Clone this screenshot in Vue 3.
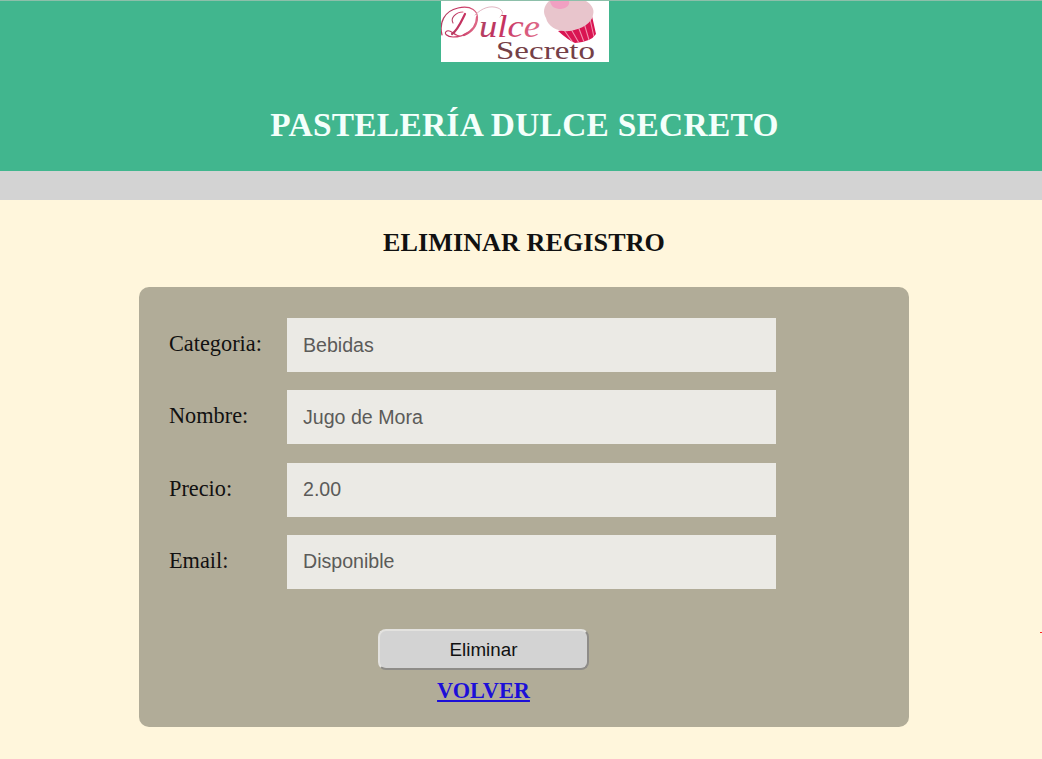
<script setup>
const fields = [
  { id: 'categoria', label: 'Categoria:', value: 'Bebidas' },
  { id: 'nombre', label: 'Nombre:', value: 'Jugo de Mora' },
  { id: 'precio', label: 'Precio:', value: '2.00' },
  { id: 'email', label: 'Email:', value: 'Disponible' },
]
</script>

<template>
  <div class="page">
    <header class="banner">
      <svg class="logo" width="168" height="61" viewBox="0 0 168 61" role="img" aria-label="Dulce Secreto">
        <defs>
          <linearGradient id="script-ink" x1="0" y1="0" x2="1" y2="0.25">
            <stop offset="0" stop-color="#a84a65" />
            <stop offset="0.45" stop-color="#c4305f" />
            <stop offset="1" stop-color="#dd6685" />
          </linearGradient>
          <clipPath id="cup"><path d="M117 30Q137 28 151 15L155 33Q150 41 134 42Q127 39 117 30Z" /></clipPath>
        </defs>
        <rect width="168" height="61" fill="#fff" />
        <path d="M117 30Q137 28 151 15L155 33Q150 41 134 42Q127 39 117 30Z" fill="#d91552" />
        <g clip-path="url(#cup)" stroke="#f290ae" stroke-width="1.1">
          <path d="M123 29l10 14M130 28l8 14M137 25l6 16M143 22l5 17M149 18l4 18" />
        </g>
        <path d="M108 0C102 6 102 12 105 17C107 26 117 31 129 30C141 28 151 22 152 14C154 8 150 3 145 0Z" fill="#e8c5cc" />
        <path d="M109 0C110 6 114 8 120 8C126 7 129 4 128 0Z" fill="#f1a0c2" />
        <g fill="none" stroke="url(#script-ink)" stroke-linecap="round">
          <path stroke-width="1.2" d="M1 34C-2 22 3 10 17 7C30 4 38 10 36 19C34 30 23 36 12 36C6 36 2 32 6 30C10 28 14 36 20 35" />
          <path stroke-width="1.1" d="M12 22C9 17 15 11 22 11" />
          <path stroke-width="2.2" d="M24 13C20 21 17 29 11 33M36 16C36 25 30 31 23 34" />
          <path stroke-width="0.8" stroke="#d9a3b2" d="M34 14C41 7 49 4 57 7C62 9 63 13 59 16" />
        </g>
        <text x="38" y="36" class="logo-script" textLength="61" lengthAdjust="spacingAndGlyphs" fill="url(#script-ink)">ulce</text>
        <text x="55" y="58" class="logo-serif" textLength="99" lengthAdjust="spacingAndGlyphs">Secreto</text>
      </svg>
      <h1>PASTELERÍA DULCE SECRETO</h1>
    </header>
    <div class="strip"></div>
    <main>
      <h2>ELIMINAR REGISTRO</h2>
      <form class="panel" @submit.prevent>
        <div v-for="field in fields" :key="field.id" class="row">
          <label :for="field.id">{{ field.label }}</label>
          <input :id="field.id" type="text" :value="field.value" disabled />
        </div>
        <div class="actions">
          <button type="submit">Eliminar</button>
          <a href="#">VOLVER</a>
        </div>
      </form>
    </main>
    <span class="marker"></span>
  </div>
</template>

<style>
body {
  margin: 0;
  background: #fff6dc;
}
</style>

<style scoped>
.page {
  position: relative;
  box-sizing: border-box;
  height: 759px;
  overflow: hidden;
  background: #fff6dc;
  font-family: "Liberation Serif", "Times New Roman", serif;
  font-size: 22.3px;
  color: #111;
}
.banner {
  box-sizing: border-box;
  height: 171px;
  border-top: 1px solid #8dbfaa;
  background: #41b68e;
  display: flex;
  flex-direction: column;
  align-items: center;
  padding-left: 7px;
}
.logo {
  display: block;
  flex: none;
}
.logo-script {
  font: italic 31px "Liberation Serif", serif;
}
.logo-serif {
  font: 26px "Liberation Serif", serif;
  fill: #754047;
}
h1 {
  margin: 43px 0 0;
  font-size: 33.4px;
  line-height: 40px;
  letter-spacing: 0.28px;
  color: #f4fffb;
  white-space: nowrap;
}
.strip {
  height: 29px;
  background: #d3d3d3;
}
main {
  display: flex;
  flex-direction: column;
  align-items: center;
  padding-left: 6px;
}
h2 {
  margin: 28px 0 30px;
  font-size: 26.1px;
  line-height: 29px;
  letter-spacing: 0.08px;
  color: #111;
}
.panel {
  box-sizing: border-box;
  width: 770px;
  height: 440px;
  padding: 31px 30px 0;
  border-radius: 10px;
  background: #b1ac98;
}
.row {
  display: flex;
  height: 54px;
  margin-bottom: 18.3px;
}
label {
  width: 118px;
  line-height: 52px;
}
input {
  box-sizing: border-box;
  width: 489px;
  height: 54px;
  margin: 0;
  padding: 0 16px;
  border: 0;
  border-radius: 0;
  background: #ebeae5;
  color: #5b5b59;
  font: 19.6px "Liberation Sans", Arial, sans-serif;
}
.actions {
  width: 629px;
  padding-top: 22px;
  display: flex;
  flex-direction: column;
  align-items: center;
}
button {
  box-sizing: border-box;
  width: 211px;
  height: 41px;
  padding: 0;
  border: 2px solid;
  border-color: #e3e2df #8e8c88 #8e8c88 #e3e2df;
  border-radius: 8px;
  background: #d3d3d3;
  color: #111;
  font: 18.8px "Liberation Sans", Arial, sans-serif;
}
a {
  margin-top: 7px;
  line-height: 27px;
  font-weight: bold;
  color: #1c0fd8;
}
.marker {
  position: absolute;
  left: 1040px;
  top: 632px;
  width: 2px;
  height: 1px;
  background: #f22;
}
</style>
